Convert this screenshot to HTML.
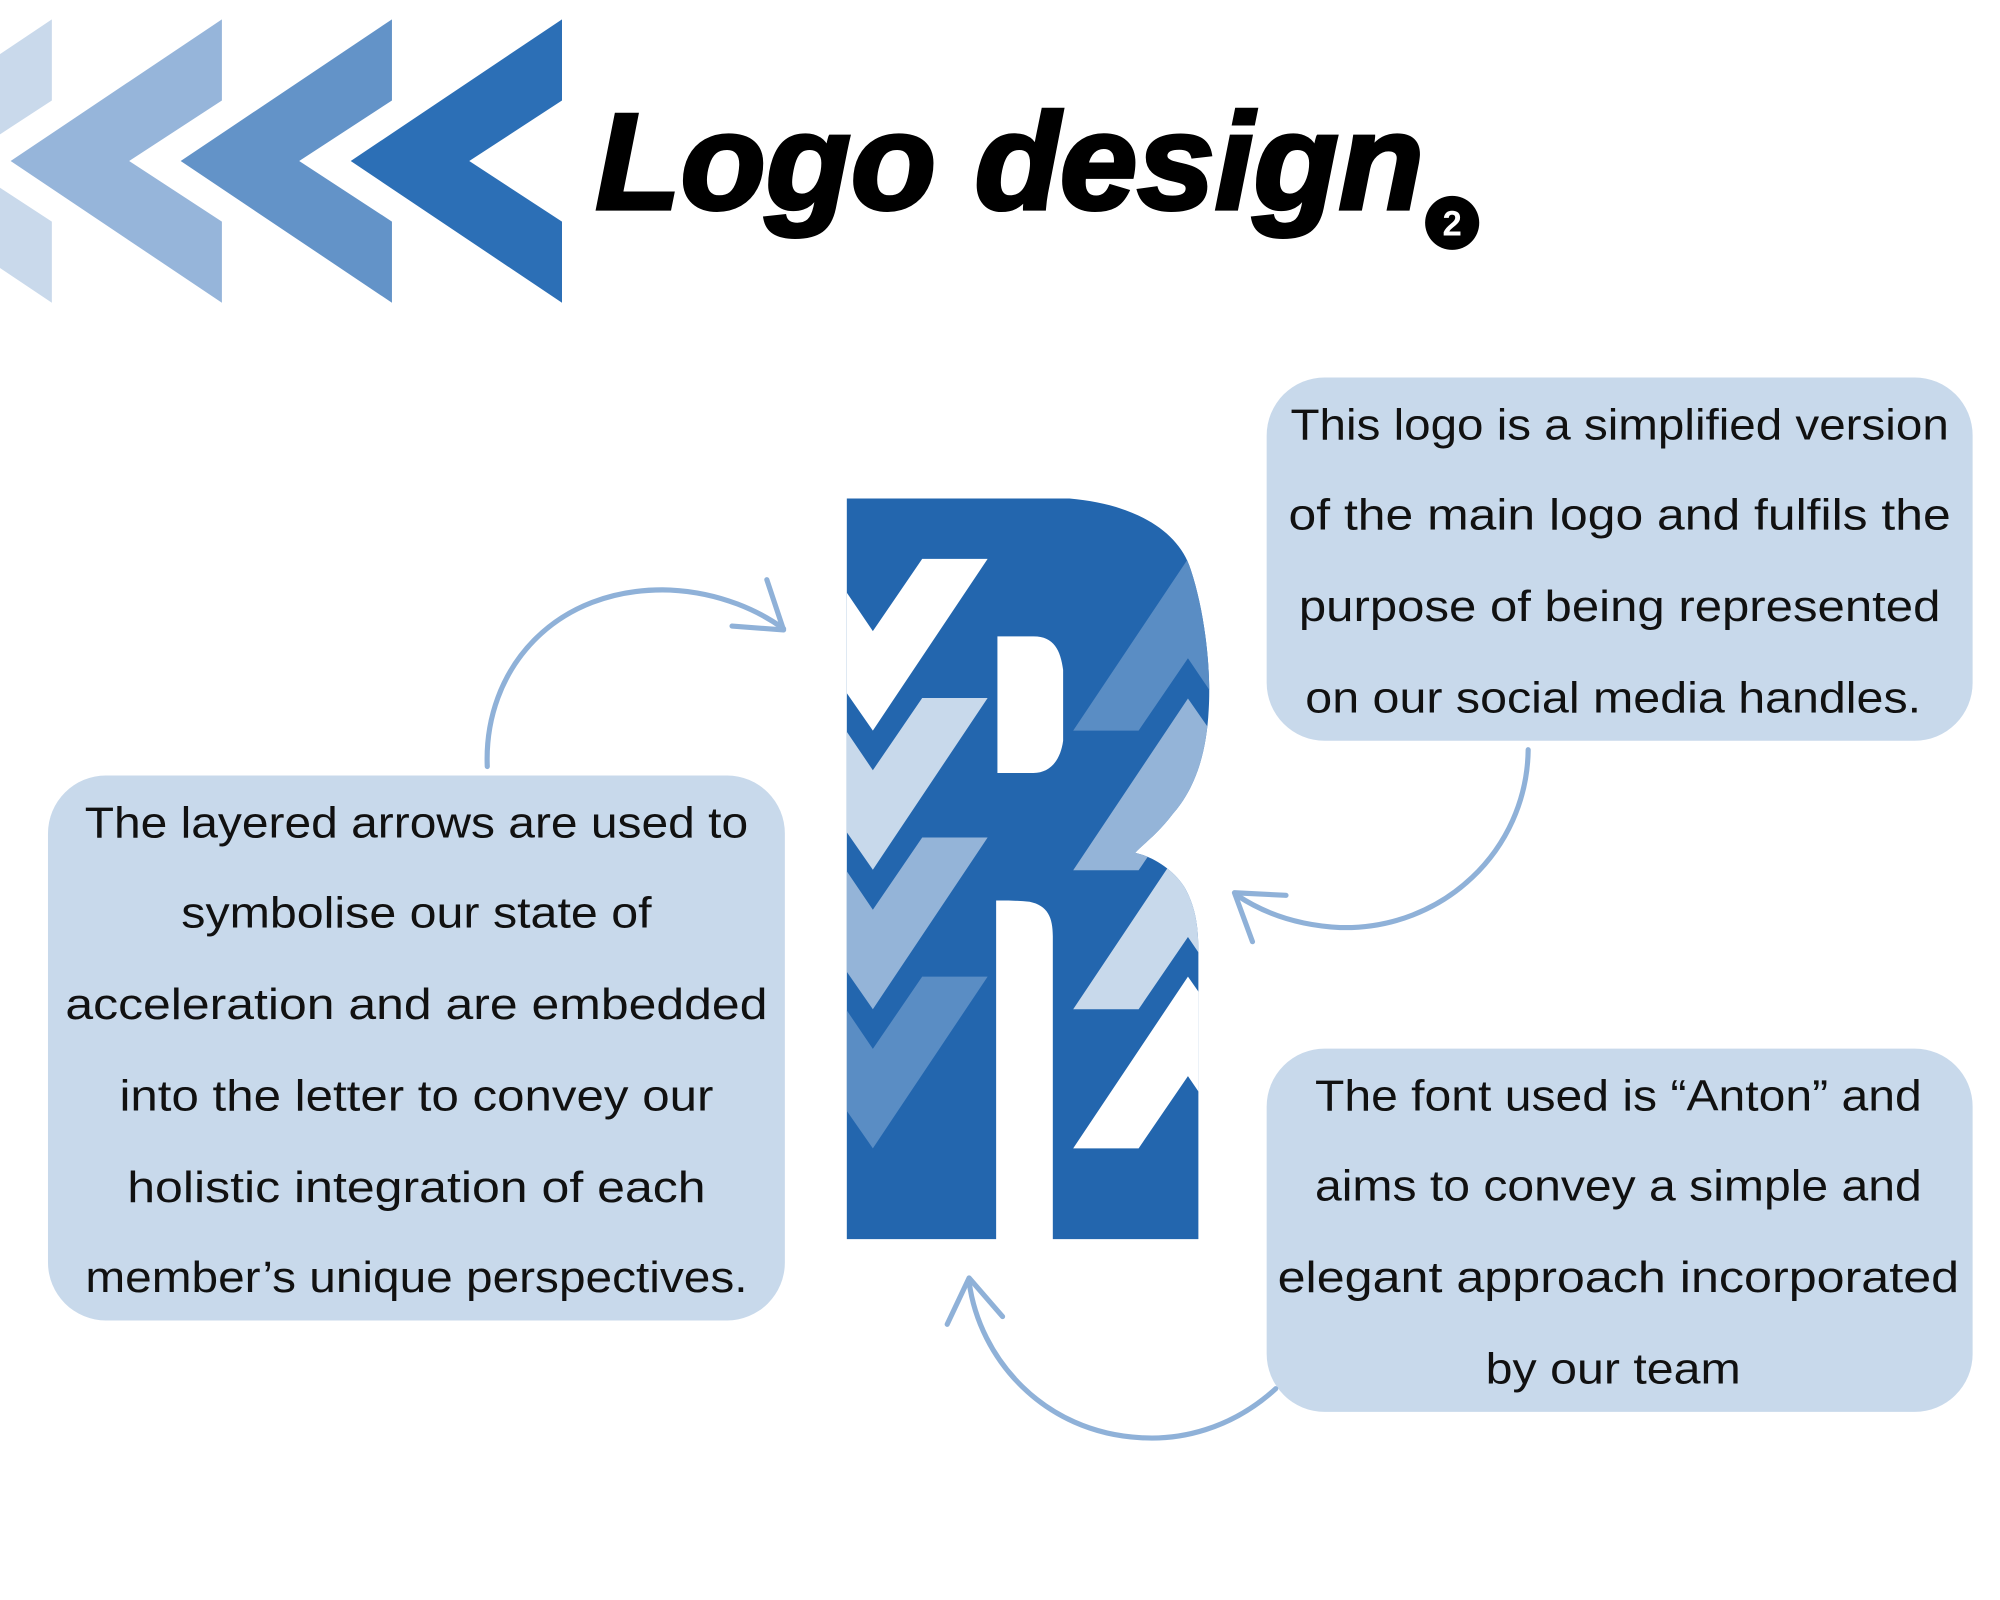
<!DOCTYPE html>
<html><head><meta charset="utf-8"><style>html,body{margin:0;padding:0;background:#fff}svg{display:block}</style></head><body>
<svg width="2000" height="1600" viewBox="0 0 1552 1242" xmlns="http://www.w3.org/2000/svg">
<rect width="1552" height="1242" fill="#fff"/>
<g>
<polygon points="40,15 40,78 -32,125 40,172 40,235 -124,125" fill="#c9d9eb"/>
<polygon points="172,15 172,78 100,125 172,172 172,235 8,125" fill="#96b5da"/>
<polygon points="304,15 304,78 232,125 304,172 304,235 140,125" fill="#6393c8"/>
<polygon points="436,15 436,78 364,125 436,172 436,235 272,125" fill="#2c6fb6"/>
</g>
<text x="462" y="162" font-family="Liberation Sans, sans-serif" font-weight="bold" font-style="italic" font-size="106" textLength="643" lengthAdjust="spacingAndGlyphs" fill="#000" stroke="#000" stroke-width="3">Logo design</text>
<circle cx="1127" cy="173" r="21" fill="#000"/>
<text x="1127" y="183" text-anchor="middle" font-family="Liberation Sans, sans-serif" font-weight="bold" font-size="27" fill="#fff">2</text>

<defs><clipPath id="rc"><path clip-rule="evenodd" d="M657 387 H830 C877 391 914 410 924 442 C935 475 940 520 938 551 C936 590 925 615 910 632 C898 648 885 657 881 662 C895 665 912 676 920 690 C928 705 930 720 930 738 V962 H817 V727 C817 712 813 703 799 700 C790 699 780 699 773 699 V962 H657 Z M774 494 H802 C818 494 823 505 825 520 V575 C823 590 815 600 802 600 H774 Z"/></clipPath></defs>
<g clip-path="url(#rc)">
<rect x="650" y="380" width="300" height="590" fill="#2366ae"/>
<g transform="translate(0,433.8)"><polygon points="657,26.1 677.3,56.1 715.6,0 766.4,0 677.3,133.3 657,104.1" fill="#fff"/></g>
<g transform="translate(0,541.8)"><polygon points="657,26.1 677.3,56.1 715.6,0 766.4,0 677.3,133.3 657,104.1" fill="#c8d9eb"/></g>
<g transform="translate(0,650.1)"><polygon points="657,26.1 677.3,56.1 715.6,0 766.4,0 677.3,133.3 657,104.1" fill="#94b4d8"/></g>
<g transform="translate(0,758.1)"><polygon points="657,26.1 677.3,56.1 715.6,0 766.4,0 677.3,133.3 657,104.1" fill="#5a8dc4"/></g>
<g transform="translate(0,891.4)"><polygon points="832.8,0 883.6,0 921.9,-56.1 942.2,-26.1 942.2,-104.1 921.9,-133.3" fill="#fff"/></g>
<g transform="translate(0,783.4)"><polygon points="832.8,0 883.6,0 921.9,-56.1 942.2,-26.1 942.2,-104.1 921.9,-133.3" fill="#c8d9eb"/></g>
<g transform="translate(0,675.5)"><polygon points="832.8,0 883.6,0 921.9,-56.1 942.2,-26.1 942.2,-104.1 921.9,-133.3" fill="#94b4d8"/></g>
<g transform="translate(0,567.1)"><polygon points="832.8,0 883.6,0 921.9,-56.1 942.2,-26.1 942.2,-104.1 921.9,-133.3" fill="#5a8dc4"/></g>
</g>

<g fill="#c8d9eb">
<rect x="37" y="602" width="572" height="423" rx="45"/>
<rect x="983" y="293" width="548" height="282" rx="45"/>
<rect x="983" y="814" width="548" height="282" rx="45"/>
</g>

<g fill="none" stroke="#8fb1d8" stroke-width="4" stroke-linecap="round">
<path d="M378 595 C375 520 430 455 520 458 C560 460 590 475 608 488"/>
<path d="M608 489 L568 486 M608 489 L595 450"/>
<path d="M1186 582 C1185 660 1120 722 1040 720 C1000 718 975 705 960 695"/>
<path d="M958 693 L998 695 M958 693 L972 731"/>
<path d="M990 1078 C955 1110 915 1118 885 1116 C810 1112 760 1055 752 995"/>
<path d="M752 992 L735 1028 M752 992 L778 1022"/>
</g>

<g font-family="Liberation Sans, DejaVu Sans, sans-serif" font-size="34" fill="#111" text-anchor="middle">
<text x="323" y="650" textLength="515" lengthAdjust="spacingAndGlyphs">The layered arrows are used to</text>
<text x="323" y="720" textLength="365" lengthAdjust="spacingAndGlyphs">symbolise our state of</text>
<text x="323" y="791" textLength="545" lengthAdjust="spacingAndGlyphs">acceleration and are embedded</text>
<text x="323" y="862" textLength="461" lengthAdjust="spacingAndGlyphs">into the letter to convey our</text>
<text x="323" y="933" textLength="449" lengthAdjust="spacingAndGlyphs">holistic integration of each</text>
<text x="323" y="1003" textLength="514" lengthAdjust="spacingAndGlyphs">member’s unique perspectives.</text>

<text x="1257" y="341" textLength="511" lengthAdjust="spacingAndGlyphs">This logo is a simplified version</text>
<text x="1257" y="411" textLength="514" lengthAdjust="spacingAndGlyphs">of the main logo and fulfils the</text>
<text x="1257" y="482" textLength="498" lengthAdjust="spacingAndGlyphs">purpose of being represented</text>
<text x="1252" y="553" textLength="478" lengthAdjust="spacingAndGlyphs">on our social media handles.</text>

<text x="1256" y="862" textLength="471" lengthAdjust="spacingAndGlyphs">The font used is “Anton” and</text>
<text x="1256" y="932" textLength="471" lengthAdjust="spacingAndGlyphs">aims to convey a simple and</text>
<text x="1256" y="1003" textLength="529" lengthAdjust="spacingAndGlyphs">elegant approach incorporated</text>
<text x="1252" y="1074" textLength="198" lengthAdjust="spacingAndGlyphs">by our team</text>
</g>
</svg>
</body></html>
